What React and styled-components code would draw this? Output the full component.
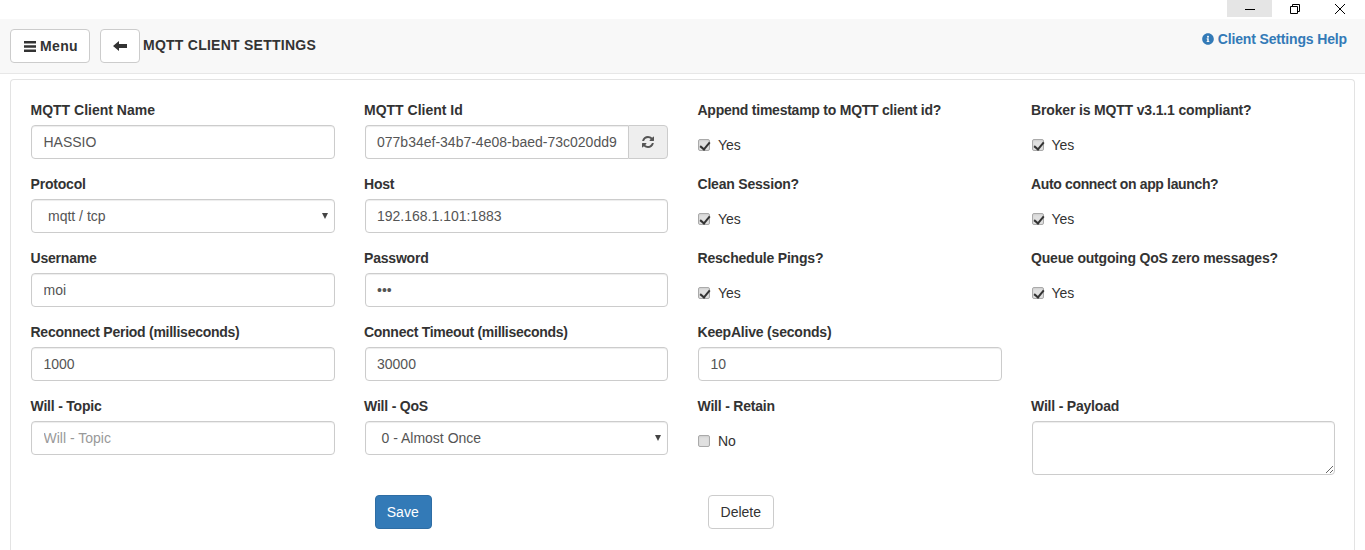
import React from 'react';
import styled, { createGlobalStyle } from 'styled-components';
import { FaInfoCircle } from 'react-icons/fa';

const Global = createGlobalStyle`
  html, body { margin: 0; padding: 0; background: #fff; height: 100%; overflow: hidden; }
  * { box-sizing: border-box; }
  body { font-family: "Liberation Sans", Arial, sans-serif; font-size: 14px; color: #333; }
`;
const Page = styled.div`width: 1365px; height: 550px; overflow: hidden; display: flex; flex-direction: column;`;
const TitleBar = styled.div`height: 19px; display: flex; justify-content: flex-end; flex: none; padding-right: 3px;`;
const WinBtn = styled.div`width: 45px; height: 17px; display: flex; align-items: center; justify-content: center; background: ${p => p.$active ? '#e5e5e5' : 'transparent'};`;
const NavBar = styled.div`height: 55px; flex: none; background: #f8f8f8; border-bottom: 1px solid #e7e7e7; display: flex; align-items: flex-start; padding: 10px 10px 0; position: relative;`;
const NavButton = styled.button`height: 34px; width: ${p => p.$w}px; padding: 0 0 0 ${p => p.$pl || 0}px; font: 700 14px "Liberation Sans", sans-serif; letter-spacing: 0.3px; color: #333; background: #fff; border: 1px solid #ccc; border-radius: 4px; display: flex; align-items: center; justify-content: center; gap: 4px; margin-right: ${p => p.$mr || 0}px;`;
const NavTitle = styled.div`font-size: 14px; font-weight: 700; color: #333; line-height: 32px; margin-left: 3px; letter-spacing: 0.25px;`;
const Help = styled.a`margin-left: auto; color: #337ab7; font-weight: 700; font-size: 14px; line-height: 20px; padding-right: 8px; display: flex; align-items: center; gap: 4px; letter-spacing: -0.15px;`;
const Panel = styled.div`margin: 5px 10px 0; height: 480px; border: 1px solid #e3e3e3; border-bottom: none; border-radius: 4px 4px 0 0; padding: 20px 9px 0 10px;`;
const Grid = styled.div`display: grid; grid-template-columns: repeat(4, 333.5px); grid-auto-rows: 74px;`;
const Cell = styled.div`padding: 0 19.9px 0 10px;`;
const Label = styled.div`font-weight: 700; font-size: 14px; line-height: 20px; margin: 0 0 5px -0.5px; letter-spacing: ${p => p.$ls ?? -0.2}px; white-space: nowrap;`;
const Input = styled.input`display: block; width: 100%; height: 34px; padding: 6px 12px 6px 11.5px; border: 1px solid #ccc; border-radius: 4px; font: 14px "Liberation Sans", sans-serif; color: #555; box-shadow: inset 0 1px 1px rgba(0,0,0,.075); background: #fff; &::placeholder { color: #999; }`;
const Group = styled.div`display: flex; height: 34px;`;
const GroupInput = styled(Input)`border-radius: 4px 0 0 4px; border-right: none; flex: 1; min-width: 0; padding-right: 0;`;
const Addon = styled.div`width: 40px; flex: none; border: 1px solid #ccc; border-radius: 0 4px 4px 0; background: #eee; display: flex; align-items: center; justify-content: center; color: #555;`;
const SelectBox = styled.div`position: relative; height: 34px; border: 1px solid #ccc; border-radius: 4px; font-size: 14px; color: #555; line-height: 32px; padding-left: 16px; box-shadow: inset 0 1px 1px rgba(0,0,0,.075); &::after { content: ""; position: absolute; right: 6px; top: 13px; border-left: 3px solid transparent; border-right: 3px solid transparent; border-top: 6px solid #444; }`;
const Check = styled.label`display: flex; align-items: center; gap: 8px; height: 20px; margin-top: 11px; padding-top: 8px; font-size: 14px; color: #333;`;
const Box = styled.span`position: relative; width: 12px; height: 12px; flex: none; border: 1px solid #aaa; border-radius: 2px; background: #e0e0e0; box-shadow: inset 0 1px 2px rgba(0,0,0,.08); &::after { content: ${p => p.$on ? '""' : 'none'}; position: absolute; left: 3px; top: 0px; width: 4px; height: 8px; border: solid #333; border-width: 0 2px 2px 0; transform: rotate(40deg); }`;
const Area = styled.textarea`display: block; width: 100%; height: 54px; border: 1px solid #ccc; border-radius: 4px; box-shadow: inset 0 1px 1px rgba(0,0,0,.075); padding: 6px 12px;`;
const Actions = styled.div`display: grid; grid-template-columns: repeat(4, 333.5px); margin-top: 25px;`;
const ActionCell = styled.div`padding-left: 20px;`;
const Btn = styled.button`height: 34px; padding: 0 11.5px 0 11px; font: 14px "Liberation Sans", sans-serif; border-radius: 4px; border: 1px solid ${p => p.$primary ? '#2e6da4' : '#ccc'}; background: ${p => p.$primary ? '#337ab7' : '#fff'}; color: ${p => p.$primary ? '#fff' : '#333'}; width: ${p => p.$w}px;`;

const Field = ({ label, value, placeholder, ls }) => <Cell><Label $ls={ls}>{label}</Label><Input readOnly value={value} placeholder={placeholder} /></Cell>;
const Sel = ({ label, value }) => <Cell><Label>{label}</Label><SelectBox>{value}</SelectBox></Cell>;
const Chk = ({ label, on = true, text = 'Yes', ls }) => <Cell><Label $ls={ls}>{label}</Label><Check><Box $on={on} />{text}</Check></Cell>;

const BarsIcon = () => (
  <svg width="12" height="11" viewBox="0 0 12 11" fill="#333"><path d="M0 0h12v2.6H0zM0 4.2h12v2.6H0zM0 8.4h12V11H0z" /></svg>
);
const BackIcon = () => (
  <svg width="14" height="10" viewBox="0 0 14 10" fill="#333"><path d="M0 5L6 0v3h8v4H6v3z" /></svg>
);
const RefreshIcon = () => (
  <svg width="14" height="14" viewBox="0 0 1792 1792" fill="#555"><path d="M1639 1056q0 5-1 7-64 268-268 434.5t-478 166.5q-146 0-282.5-55t-243.5-157l-129 129q-19 19-45 19t-45-19-19-45v-448q0-26 19-45t45-19h448q26 0 45 19t19 45-19 45l-137 137q71 66 161 102t187 36q134 0 250-65t186-179q11-17 53-117 8-23 30-23h192q13 0 22.5 9.5t9.5 22.5zm25-800v448q0 26-19 45t-45 19h-448q-26 0-45-19t-19-45 19-45l138-138q-148-137-349-137-134 0-250 65t-186 179q-11 17-53 117-8 23-30 23h-199q-13 0-22.5-9.5t-9.5-22.5v-7q65-268 270-434.5t480-166.5q146 0 284 55.5t245 156.5l130-129q19-19 45-19t45 19 19 45z" /></svg>
);

export default function App() {
  return (
    <Page>
      <Global />
      <TitleBar>
        <WinBtn $active><svg width="10" height="10"><path d="M0 5.5h10" stroke="#000" /></svg></WinBtn>
        <WinBtn><svg width="10" height="10"><path d="M.5 2.5h7v7h-7zM2.5 2.5v-2h7v7h-2" fill="none" stroke="#000" /></svg></WinBtn>
        <WinBtn><svg width="10" height="10"><path d="M0 0l10 10M10 0L0 10" stroke="#000" /></svg></WinBtn>
      </TitleBar>
      <NavBar>
        <NavButton $w={80} $mr={10} $pl={2}><BarsIcon />Menu</NavButton>
        <NavButton $w={40}><BackIcon /></NavButton>
        <NavTitle>MQTT CLIENT SETTINGS</NavTitle>
        <Help><FaInfoCircle size={12} />Client Settings Help</Help>
      </NavBar>
      <Panel>
        <Grid>
          <Field label="MQTT Client Name" value="HASSIO" ls={0} />
          <Cell><Label $ls={0}>MQTT Client Id</Label><Group><GroupInput readOnly value="077b34ef-34b7-4e08-baed-73c020dd9" /><Addon><RefreshIcon /></Addon></Group></Cell>
          <Chk label="Append timestamp to MQTT client id?" ls={-0.24} />
          <Chk label="Broker is MQTT v3.1.1 compliant?" ls={-0.16} />
          <Sel label="Protocol" value="mqtt / tcp" />
          <Field label="Host" value="192.168.1.101:1883" />
          <Chk label="Clean Session?" />
          <Chk label="Auto connect on app launch?" ls={-0.35} />
          <Field label="Username" value="moi" />
          <Field label="Password" value="•••" />
          <Chk label="Reschedule Pings?" />
          <Chk label="Queue outgoing QoS zero messages?" ls={-0.18} />
          <Field label="Reconnect Period (milliseconds)" value="1000" ls={-0.26} />
          <Field label="Connect Timeout (milliseconds)" value="30000" ls={-0.28} />
          <Field label="KeepAlive (seconds)" value="10" ls={-0.2} />
          <Cell />
          <Field label="Will - Topic" placeholder="Will - Topic" value="" />
          <Sel label="Will - QoS" value="0 - Almost Once" />
          <Chk label="Will - Retain" on={false} text="No" />
          <Cell><Label>Will - Payload</Label><Area readOnly /></Cell>
        </Grid>
        <Actions>
          <span />
          <ActionCell><Btn $primary $w={57}>Save</Btn></ActionCell>
          <ActionCell><Btn $w={66}>Delete</Btn></ActionCell>
        </Actions>
      </Panel>
    </Page>
  );
}
